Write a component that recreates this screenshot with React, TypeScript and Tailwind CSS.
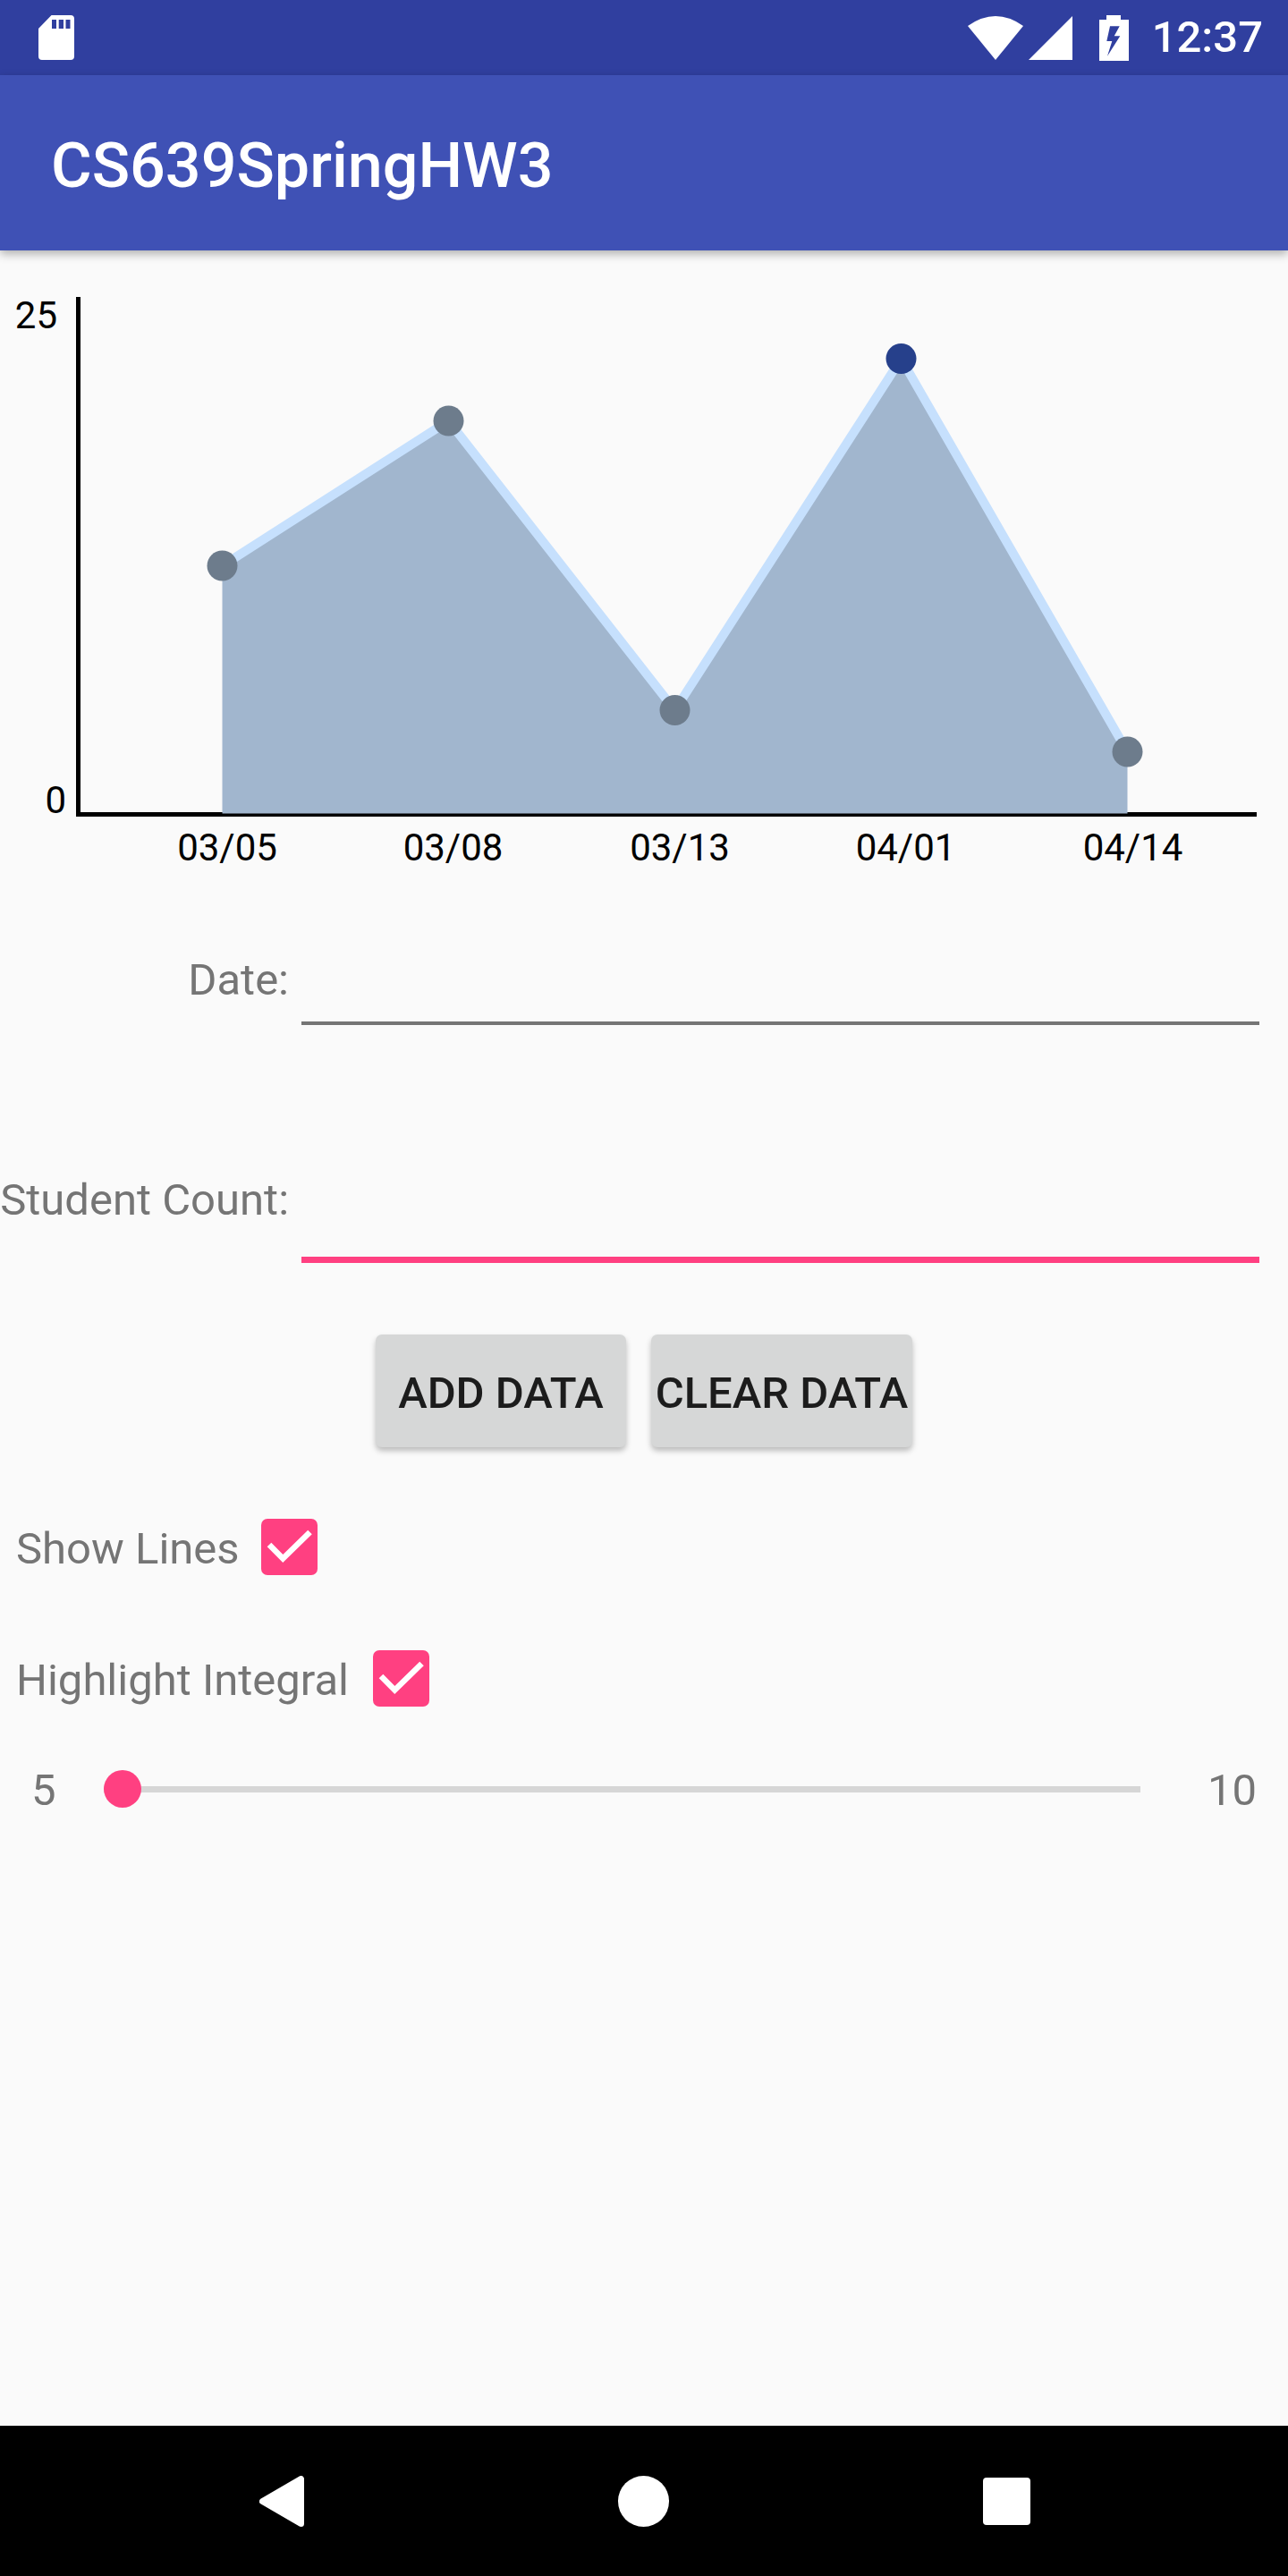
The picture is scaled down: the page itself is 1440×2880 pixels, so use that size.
const points: [number, number][] = [
  [248.5, 632.5],
  [501.5, 470.5],
  [754.5, 794],
  [1007.5, 401],
  [1260.5, 840.5],
];

const ticks = [
  { label: "03/05", x: 254 },
  { label: "03/08", x: 506.5 },
  { label: "03/13", x: 760 },
  { label: "04/01", x: 1012.5 },
  { label: "04/14", x: 1266.5 },
];

function StatusBar() {
  return (
    <div className="flex h-[84px] shrink-0 items-center bg-[#303f9f] pl-[43px] pr-[28px] text-white">
      <svg width="40" height="50" viewBox="0 0 40 50" fill="white">
        <path
          fillRule="evenodd"
          d="M14.5 0H36a4 4 0 0 1 4 4V46a4 4 0 0 1-4 4H4a4 4 0 0 1-4-4V15ZM15 5V15H20V5ZM22.7 5V15H28V5ZM30.5 5V15H35.5V5Z"
        />
      </svg>
      <svg className="ml-auto" width="62" height="49" viewBox="0 0 62 49" fill="white">
        <path d="M0 11Q31-11 62 11L31 49Z" />
      </svg>
      <svg className="ml-[6px]" width="49" height="49" viewBox="0 0 49 49" fill="white">
        <path d="M49 0V49H0Z" />
      </svg>
      <svg className="ml-[30px]" width="33" height="51" viewBox="0 0 33 51" fill="white">
        <path
          fillRule="evenodd"
          d="M8 0H24V5H33V51H0V5H8ZM12 12.3L8.3 29H14.3L9 45.7L23.3 23.3H16.7L22.7 12.3Z"
        />
      </svg>
      <span className="ml-[26px] text-[49px] leading-[58px] font-medium">12:37</span>
    </div>
  );
}

function Chart() {
  const line = points.map(([x, y]) => `${x},${y}`).join(" ");
  const area = `248.5,909.5 ${line} 1260.5,909.5`;
  return (
    <svg className="block shrink-0" width="1440" height="720" viewBox="0 280 1440 720">
      <rect x="85" y="332" width="5" height="581" fill="#000" />
      <rect x="85" y="908" width="1320" height="5" fill="#000" />
      <polygon points={area} fill="#a1b6ce" />
      <polyline points={line} fill="none" stroke="#c6e0fd" strokeWidth="10" />
      {points.map(([x, y], i) => (
        <circle key={x} cx={x} cy={y} r="17" fill={i === 3 ? "#26408b" : "#6d7c8c"} />
      ))}
      <text x="64" y="367" textAnchor="end" fontSize="42" fill="#000">
        25
      </text>
      <text x="74" y="909" textAnchor="end" fontSize="42" fill="#000">
        0
      </text>
      {ticks.map((tick) => (
        <text key={tick.label} x={tick.x} y="961.5" textAnchor="middle" fontSize="42" fill="#000">
          {tick.label}
        </text>
      ))}
    </svg>
  );
}

function CheckRow({ label, labelWidth, className }: { label: string; labelWidth: string; className: string }) {
  return (
    <div className={`flex h-[63px] items-center pl-[18px] ${className}`}>
      <span className={`mt-[5px] text-[49px] leading-[58px] whitespace-nowrap text-[#757575] ${labelWidth}`}>
        {label}
      </span>
      <span className="flex h-[63px] w-[63px] items-center justify-center rounded-[7px] bg-[#ff4081]">
        <svg width="63" height="63" viewBox="0 0 63 63" fill="none">
          <path d="M9 29L24.3 44.5L54.5 15" stroke="white" strokeWidth="6.5" />
        </svg>
      </span>
    </div>
  );
}

function NavBar() {
  return (
    <div className="flex h-[168px] shrink-0 items-center justify-center gap-[351px] bg-black pl-[2px]">
      <svg width="50" height="57" viewBox="0 0 50 57" fill="white">
        <path d="M46.5 3.5V53.5L3.5 28.5Z" stroke="white" strokeWidth="7" strokeLinejoin="round" />
      </svg>
      <div className="h-[57px] w-[57px] rounded-full bg-white" />
      <div className="h-[53px] w-[53px] rounded-[4px] bg-white" />
    </div>
  );
}

export default function App() {
  return (
    <div className="flex h-[2880px] w-[1440px] flex-col bg-[#fafafa] font-[Roboto,sans-serif]">
      <StatusBar />
      <div className="relative z-10 flex h-[196px] shrink-0 items-center bg-[#3f51b5] pl-[57px] pt-[6px] text-[70px] font-medium text-white shadow-[0_4px_10px_rgba(0,0,0,0.3)]">
        CS639SpringHW3
      </div>
      <main className="flex flex-1 flex-col">
        <Chart />
        <div className="flex h-[146px] shrink-0">
          <span className="mt-[67px] w-[323px] text-right text-[49px] leading-[58px] text-[#757575]">Date:</span>
          <div className="ml-[14px] w-[1071px] border-b-[4px] border-[#757575]" />
        </div>
        <div className="flex h-[266px] shrink-0">
          <span className="mt-[167px] w-[323px] text-right text-[49px] leading-[58px] whitespace-nowrap text-[#757575]">
            Student Count:
          </span>
          <div className="ml-[14px] w-[1071px] border-b-[7px] border-[#ff4081]" />
        </div>
        <div className="mt-[80px] flex h-[126px] shrink-0 justify-center gap-[28px] text-[49px] font-medium text-[#1c1c1c]">
          <div className="flex w-[280px] items-center justify-center rounded-[7px] bg-[#d6d7d7] pt-[5px] shadow-[0_4px_6px_rgba(0,0,0,0.25)]">
            ADD DATA
          </div>
          <div className="flex w-[292px] items-center justify-center rounded-[7px] bg-[#d6d7d7] pt-[5px] shadow-[0_4px_6px_rgba(0,0,0,0.25)]">
            CLEAR DATA
          </div>
        </div>
        <CheckRow label="Show Lines" labelWidth="w-[274px]" className="mt-[80px]" />
        <CheckRow label="Highlight Integral" labelWidth="w-[399px]" className="mt-[84px]" />
        <div className="mt-[71px] flex h-[42px] items-center pl-[35px] pr-[35px] text-[49px] leading-[58px] text-[#757575]">
          <span className="mt-[3px] w-[81px]">5</span>
          <div className="relative h-[7px] w-[1159px] bg-[#d6d6d6]">
            <span className="absolute top-[-17.5px] left-0 h-[42px] w-[42px] rounded-full bg-[#ff4081]" />
          </div>
          <span className="mt-[3px] ml-auto">10</span>
        </div>
      </main>
      <NavBar />
    </div>
  );
}
